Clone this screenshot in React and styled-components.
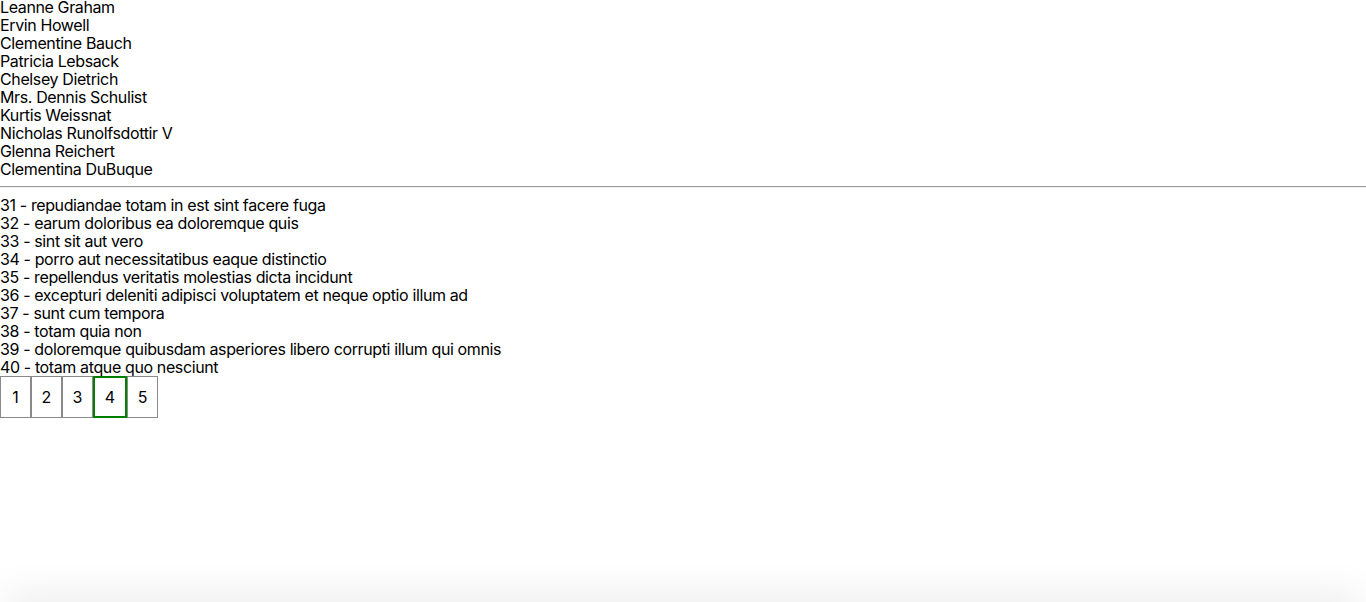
import React, { useState } from 'react';
import styled, { createGlobalStyle } from 'styled-components';

const GlobalStyle = createGlobalStyle`
  body {
    margin: 0;
    background: #fff;
    color: #000;
    font-family: Inter, "Noto Sans", sans-serif;
    font-size: 16px;
    letter-spacing: -0.38px;
  }
`;

const users = [
  'Leanne Graham',
  'Ervin Howell',
  'Clementine Bauch',
  'Patricia Lebsack',
  'Chelsey Dietrich',
  'Mrs. Dennis Schulist',
  'Kurtis Weissnat',
  'Nicholas Runolfsdottir V',
  'Glenna Reichert',
  'Clementina DuBuque',
];

const posts = [
  [31, 'repudiandae totam in est sint facere fuga'],
  [32, 'earum doloribus ea doloremque quis'],
  [33, 'sint sit aut vero'],
  [34, 'porro aut necessitatibus eaque distinctio'],
  [35, 'repellendus veritatis molestias dicta incidunt'],
  [36, 'excepturi deleniti adipisci voluptatem et neque optio illum ad'],
  [37, 'sunt cum tempora'],
  [38, 'totam quia non'],
  [39, 'doloremque quibusdam asperiores libero corrupti illum qui omnis'],
  [40, 'totam atque quo nesciunt'],
];

const List = styled.div`
  display: flex;
  flex-direction: column;
`;

// 18px rows; the user names sit a bit higher in theirs than the posts do
const Row = styled.div`
  line-height: 14px;
  height: 18px;
  box-sizing: border-box;
  padding: ${(p) => (p.high ? '0 0 4px' : '2px 0 2px')};
  white-space: nowrap;
`;

const Divider = styled.hr`
  margin: 6px 0 8px;
  border: 0;
  border-top: 1px solid #9a9a9a;
  border-bottom: 1px solid #eee;
`;

const Pager = styled.div`
  display: flex;
`;

const PageButton = styled.button`
  box-sizing: border-box;
  height: 42px;
  width: ${(p) => (p.active ? '34px' : '31px')};
  padding: 0;
  text-align: center;
  background: #fff;
  border: ${(p) => (p.active ? '2px solid #008000' : '1px solid #8a8a8a')};
  font-family: Inter, "Noto Sans", sans-serif;
  font-size: 16px;
  color: #000;
  cursor: pointer;
`;

const BottomShade = styled.div`
  position: fixed;
  left: 12px;
  right: 12px;
  top: 100%;
  height: 20px;
  box-shadow: 0 0 40px 6px rgba(0, 0, 0, 0.09);
`;

export default function App() {
  let [page, setPage] = useState(4);

  return (
    <>
      <GlobalStyle />
      <List>
        {users.map((name) => (
          <Row key={name} high>
            {name}
          </Row>
        ))}
      </List>
      <Divider />
      <List>
        {posts.map(([id, title]) => (
          <Row key={id}>
            {id} - {title}
          </Row>
        ))}
      </List>
      <Pager>
        {[1, 2, 3, 4, 5].map((n) => (
          <PageButton key={n} active={n === page} onClick={() => setPage(n)}>
            {n}
          </PageButton>
        ))}
      </Pager>
      <BottomShade />
    </>
  );
}
